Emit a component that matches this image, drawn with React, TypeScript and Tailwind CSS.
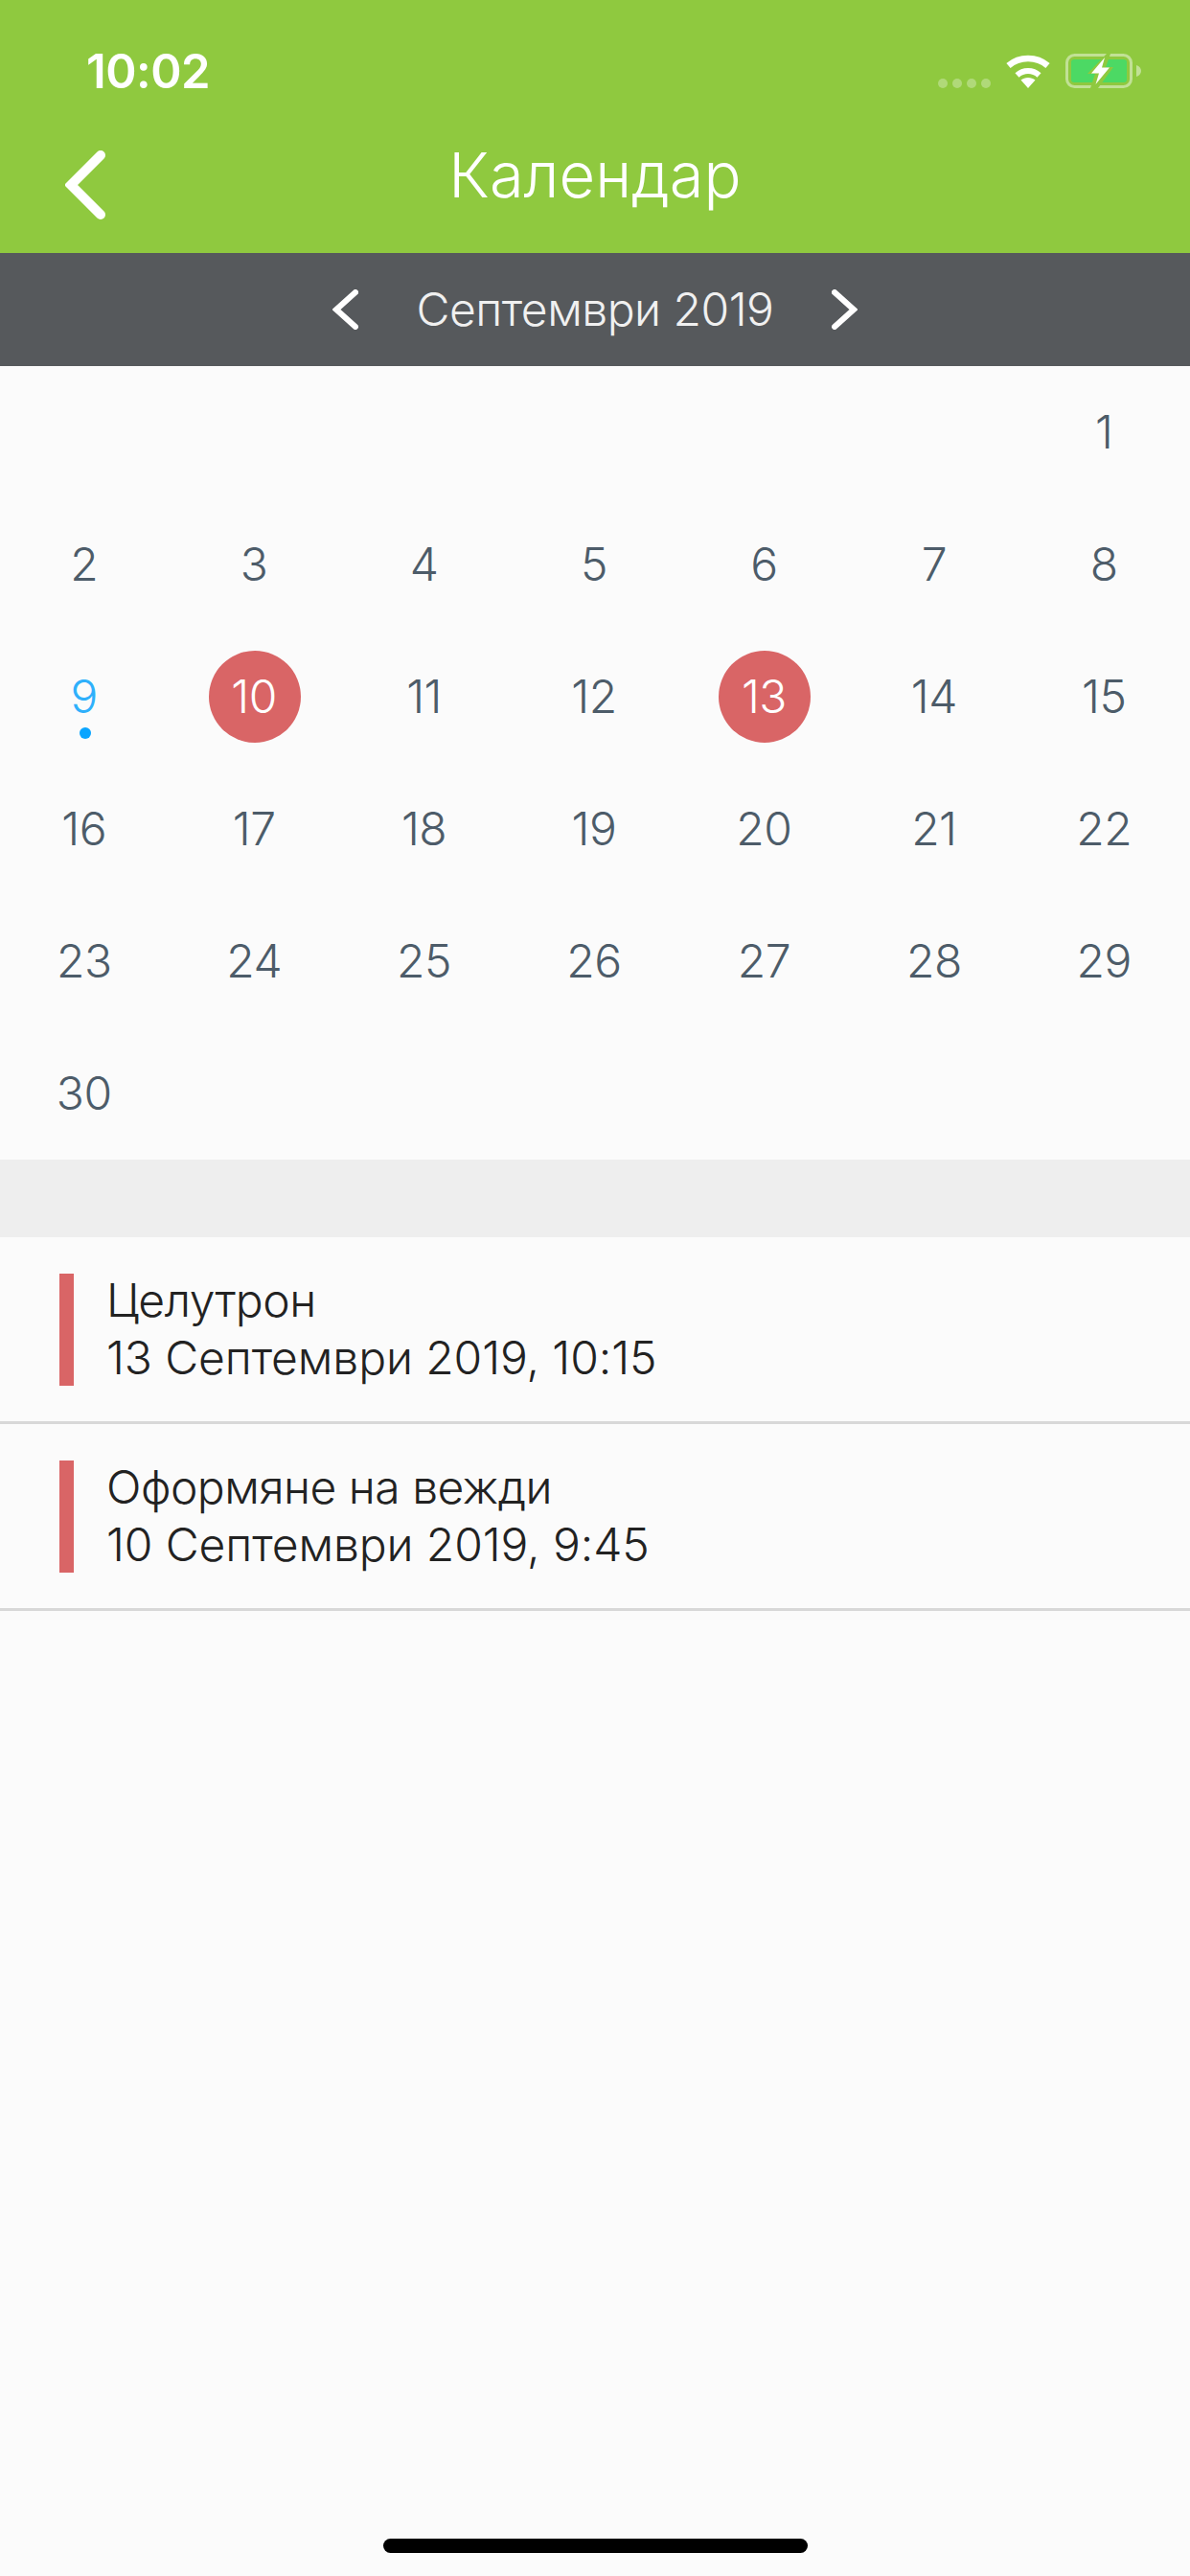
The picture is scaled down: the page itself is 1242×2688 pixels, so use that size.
const FONT = "font-['Inter','Noto_Sans',sans-serif]";

const days: (number | null)[] = [
  null, null, null, null, null, null, 1,
  2, 3, 4, 5, 6, 7, 8,
  9, 10, 11, 12, 13, 14, 15,
  16, 17, 18, 19, 20, 21, 22,
  23, 24, 25, 26, 27, 28, 29,
  30, null, null, null, null, null, null,
];

const TODAY = 9;
const BOOKED = [10, 13];

const events = [
  { title: "Целутрон", when: "13 Септември 2019, 10:15" },
  { title: "Оформяне на вежди", when: "10 Септември 2019, 9:45" },
];

function Wifi() {
  return (
    <svg width="50" height="36" viewBox="0 0 50 36" fill="none">
      <path d="M25 36 L17.5 27.5 C21.5 24 28.5 24 32.5 27.5 Z" fill="#fff" />
      <path d="M13.5 22.5 C20 16.5 30 16.5 36.5 22.5" stroke="#fff" strokeWidth="6" />
      <path d="M4.5 12.5 C16 2.5 34 2.5 45.5 12.5" stroke="#fff" strokeWidth="6.5" />
    </svg>
  );
}

function Battery() {
  return (
    <svg width="80" height="36" viewBox="0 0 80 36" fill="none">
      <rect x="1.5" y="1.5" width="67" height="33" rx="8" stroke="#fff" strokeOpacity="0.45" strokeWidth="3" />
      <rect x="6" y="6" width="58" height="24" rx="3" fill="#4cd964" />
      <path d="M74 12 C77.5 13 79 15.5 79 18 C79 20.5 77.5 23 74 24 Z" fill="#fff" fillOpacity="0.45" />
      {/* charging bolt, with a cut-out halo through the outline */}
      <path d="M43 0 L23 21 H31 L26 36 L34 36 L50 14 H42 L47 0 Z" fill="#8fc93f" />
      <path d="M41 4 L27 20.5 H35 L31.5 32 L46 14.5 H38 Z" fill="#fff" />
    </svg>
  );
}

function Chevron({ dir, w, h, sw }: { dir: "left" | "right"; w: number; h: number; sw: number }) {
  const pts = dir === "left"
    ? `${w - sw / 2},${sw / 2} ${sw / 2 + 1},${h / 2} ${w - sw / 2},${h - sw / 2}`
    : `${sw / 2},${sw / 2} ${w - sw / 2 - 1},${h / 2} ${sw / 2},${h - sw / 2}`;
  return (
    <svg width={w} height={h} viewBox={`0 0 ${w} ${h}`} fill="none">
      <polyline points={pts} stroke="#fff" strokeWidth={sw} strokeLinecap="round" strokeLinejoin="miter" />
    </svg>
  );
}

function DayCell({ day }: { day: number | null }) {
  if (day === null) return <div />;
  const booked = BOOKED.includes(day);
  const today = day === TODAY;
  return (
    <div className="flex items-center justify-center">
      <div
        className={`relative flex h-[96px] w-[96px] items-center justify-center rounded-full pr-[2px] text-[48px] font-light tracking-[-0.5px] ${
          booked ? "bg-[#d96566] text-white" : today ? "text-[#2fb0fb]" : "text-[#4d5c69]"
        }`}
      >
        {day}
        {today && <span className="absolute bottom-[4px] left-[42px] h-[12px] w-[12px] rounded-full bg-[#0aa5ff]" />}
      </div>
    </div>
  );
}

export default function App() {
  return (
    <div className={`flex h-[2688px] w-[1242px] flex-col overflow-hidden bg-[#fbfbfb] ${FONT}`}>
      <header className="h-[264px] bg-[#8fc93f] text-white">
        <div className="flex h-[148px] items-start justify-between pl-[90px] pr-[50px] pt-[51px]">
          <span className="text-[49px] leading-[48px] font-semibold tracking-[-0.5px]">10:02</span>
          <div className="-mt-[1px] flex items-end pt-[6px]">
            <div className="flex gap-[5px]">
              <span className="h-[10px] w-[10px] rounded-full bg-white/30" />
              <span className="h-[10px] w-[10px] rounded-full bg-white/30" />
              <span className="h-[10px] w-[10px] rounded-full bg-white/30" />
              <span className="h-[10px] w-[10px] rounded-full bg-white/30" />
            </div>
            <div className="ml-[14px]"><Wifi /></div>
            <div className="ml-[14px]"><Battery /></div>
          </div>
        </div>
        <div className="relative flex h-[70px] items-center justify-center">
          <div className="absolute left-[68px] top-[9px] flex"><Chevron dir="left" w={42} h={72} sw={10} /></div>
          <span className="text-[65px] font-light">Календар</span>
        </div>
      </header>

      <div className="flex h-[118px] items-center justify-center bg-[#56595c] text-white">
        <Chevron dir="left" w={27} h={42} sw={6} />
        <span className="mx-[61px] text-[48px] font-light tracking-[-0.5px] text-[#f0f0f0]">Септември 2019</span>
        <Chevron dir="right" w={27} h={42} sw={6} />
      </div>

      <div className="grid h-[828px] grid-cols-7 grid-rows-6">
        {days.map((d, i) => <DayCell key={i} day={d} />)}
      </div>

      <div className="h-[81px] bg-[#eeeeee]" />

      <div>
        {events.map((e) => (
          <div key={e.when} className="flex h-[195px] items-center border-b-[3px] border-[#d8d8d8] pl-[62px]">
            <div className="h-[117px] w-[15px] bg-[#d96566]" />
            <div className="ml-[34px] text-[48px] leading-[60px] font-light text-[#222]">
              <div className="tracking-[-0.5px]">{e.title}</div>
              <div className="tracking-[-0.1px]">{e.when}</div>
            </div>
          </div>
        ))}
      </div>

      <div className="flex flex-1 items-end justify-center pb-[24px]">
        <div className="h-[15px] w-[443px] rounded-full bg-black" />
      </div>
    </div>
  );
}
